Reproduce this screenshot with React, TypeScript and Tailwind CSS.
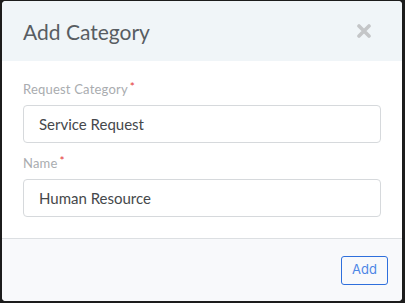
export default function App() {
  return (
    <div className="h-[303px] w-[405px] bg-[#1c1c1c] pl-[2px] pt-[1px] font-['Lato',sans-serif]">
      <div className="flex h-[300px] w-[400px] flex-col overflow-hidden rounded-[4px] bg-white">
        {/* Header */}
        <div className="flex h-[60px] items-center justify-between bg-[#f0f5f8] pl-[21px] pr-[30px]">
          <h2 className="text-[21px] leading-none text-[#585d62]">Add Category</h2>
          <svg width="14" height="14" viewBox="0 0 14 14" className="mr-[1px]">
            <path d="M2 2 L12 12 M12 2 L2 12" stroke="#c4c6c8" strokeWidth="3.6" strokeLinecap="round" />
          </svg>
        </div>

        {/* Body */}
        <div className="flex flex-1 flex-col border-b border-[#dcdfe2] px-[21px] pt-[21px]">
          <label className="flex items-start text-[13px] leading-[15px] tracking-[0.2px] text-[#a9acaf]">
            Request Category<span className="ml-[2px] text-[12px] leading-[10px] text-[#e53935]">*</span>
          </label>
          <input
            readOnly
            value="Service Request"
            className="mt-[8px] h-[38px] w-[358px] rounded-[4px] border border-[#d6d9dc] px-[15px] text-[15px] text-[#45484b] outline-none"
          />
          <label className="mt-[13px] flex items-start text-[13px] leading-[15px] tracking-[0.2px] text-[#a9acaf]">
            Name<span className="ml-[2px] text-[12px] leading-[10px] text-[#e53935]">*</span>
          </label>
          <input
            readOnly
            value="Human Resource"
            className="mt-[8px] h-[38px] w-[358px] rounded-[4px] border border-[#d6d9dc] px-[15px] text-[15px] text-[#45484b] outline-none"
          />
        </div>

        {/* Footer */}
        <div className="flex h-[62px] items-center justify-end bg-[#f8f9fb] pr-[14px]">
          <button className="h-[29px] w-[47px] rounded-[3px] border border-[#2e6fdc] font-['Inter',sans-serif] text-[13px] text-[#4d86e6]">
            Add
          </button>
        </div>
      </div>
    </div>
  );
}
